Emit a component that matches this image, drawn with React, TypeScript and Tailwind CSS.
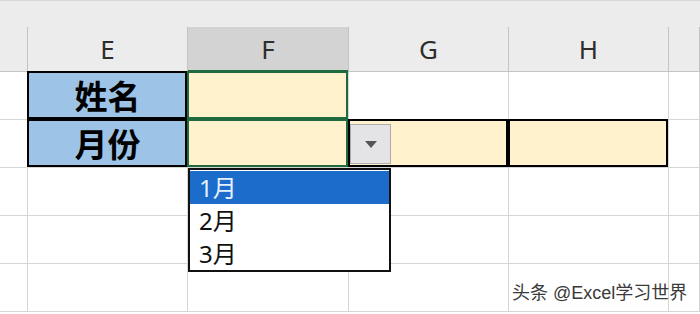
import React from 'react';

const gridLine = 'border-r border-b border-[#d6d6d6]';
const headLine = 'border-r border-b border-[#c4c4c4]';

function Frame({ color }: { color: string }) {
  return <div className={`pointer-events-none absolute -left-px -top-px right-0 bottom-0 z-10 border-2 ${color}`} />;
}

function Cell({ bg = 'bg-white', frame, children }: { bg?: string; frame?: string; children?: React.ReactNode }) {
  return (
    <div className={`relative flex items-center justify-center ${gridLine} ${bg}`}>
      {frame && <Frame color={frame} />}
      {children}
    </div>
  );
}

export default function App() {
  const columns = ['E', 'F', 'G', 'H'];
  const months = ['1月', '2月', '3月'];

  return (
    <div
      className="relative h-[314px] w-[700px] overflow-hidden bg-white"
      style={{ fontFamily: "'Noto Sans', 'Noto Sans CJK SC', sans-serif" }}
    >
      {/* top strip */}
      <div className="h-[27px] border-t border-[#d8d8d8] bg-[#ececec]" />

      <div className="grid grid-cols-[28px_160px_161px_160px_160px_31px] grid-rows-[45px_48px_48px_48px_48px_48px]">
        {/* column headers */}
        <div className={`${headLine} bg-[#ececec]`} />
        {columns.map((c) => (
          <div
            key={c}
            className={`relative flex items-center justify-center ${headLine} text-[26px] text-[#2e2e2e] ${
              c === 'F' ? 'bg-[#d3d3d3]' : 'bg-[#ececec]'
            }`}
          >
            {c}
            {c === 'F' && <div className="absolute -bottom-px left-0 right-0 h-[2px] bg-[#1f6b3f]" />}
          </div>
        ))}
        <div className={`${headLine} bg-[#ececec]`} />

        {/* row 1 */}
        <Cell />
        <Cell bg="bg-[#9dc3e6]" frame="border-black">
          <span className="text-[33px] font-bold leading-none text-black" style={{ fontFamily: "'Noto Sans CJK SC', sans-serif" }}>
            姓名
          </span>
        </Cell>
        <Cell bg="bg-[#fff2cc]" frame="border-[#1f6b3f]" />
        <Cell />
        <Cell />
        <Cell />

        {/* row 2 */}
        <Cell />
        <Cell bg="bg-[#9dc3e6]" frame="border-black">
          <span className="text-[33px] font-bold leading-none text-black" style={{ fontFamily: "'Noto Sans CJK SC', sans-serif" }}>
            月份
          </span>
        </Cell>
        <Cell bg="bg-[#fff2cc]" frame="border-[#1f6b3f]" />
        <Cell bg="bg-[#fff2cc]" frame="border-black" />
        <Cell bg="bg-[#fff2cc]" frame="border-black" />
        <Cell />

        {/* rows 3-5 */}
        {[3, 4, 5].map((r) => (
          <React.Fragment key={r}>
            <Cell />
            <Cell />
            <Cell />
            <Cell />
            <Cell />
            <Cell />
          </React.Fragment>
        ))}
      </div>

      {/* dropdown arrow button */}
      <div className="absolute left-[350px] top-[124px] z-20 flex h-[40px] w-[41px] items-center justify-center border border-[#adadad] bg-[#e4e4e7]">
        <svg width="12" height="7" viewBox="0 0 12 7">
          <path d="M0 0h12L6 7z" fill="#555" />
        </svg>
      </div>

      {/* dropdown list */}
      <div className="absolute left-[188px] top-[168px] z-20 h-[104px] w-[203px] border-2 border-[#111] bg-white pt-px">
        {months.map((m, i) => (
          <div
            key={m}
            className={`flex h-[33px] items-center pl-[9px] text-[24px] leading-none ${
              i === 0 ? 'bg-[#1b6ccb] text-[#e6f1ff]' : 'text-[#111]'
            }`}
            style={{ fontFamily: "'Noto Sans', 'Noto Sans CJK SC', sans-serif" }}
          >
            {m}
          </div>
        ))}
      </div>

      {/* watermark */}
      <div
        className="absolute left-[512px] top-[284px] z-20 text-[18px] leading-none text-[#3a3a3a]"
        style={{ fontFamily: "'Liberation Sans', 'Noto Sans CJK SC', sans-serif" }}
      >
        头条 @Excel学习世界
      </div>
    </div>
  );
}
